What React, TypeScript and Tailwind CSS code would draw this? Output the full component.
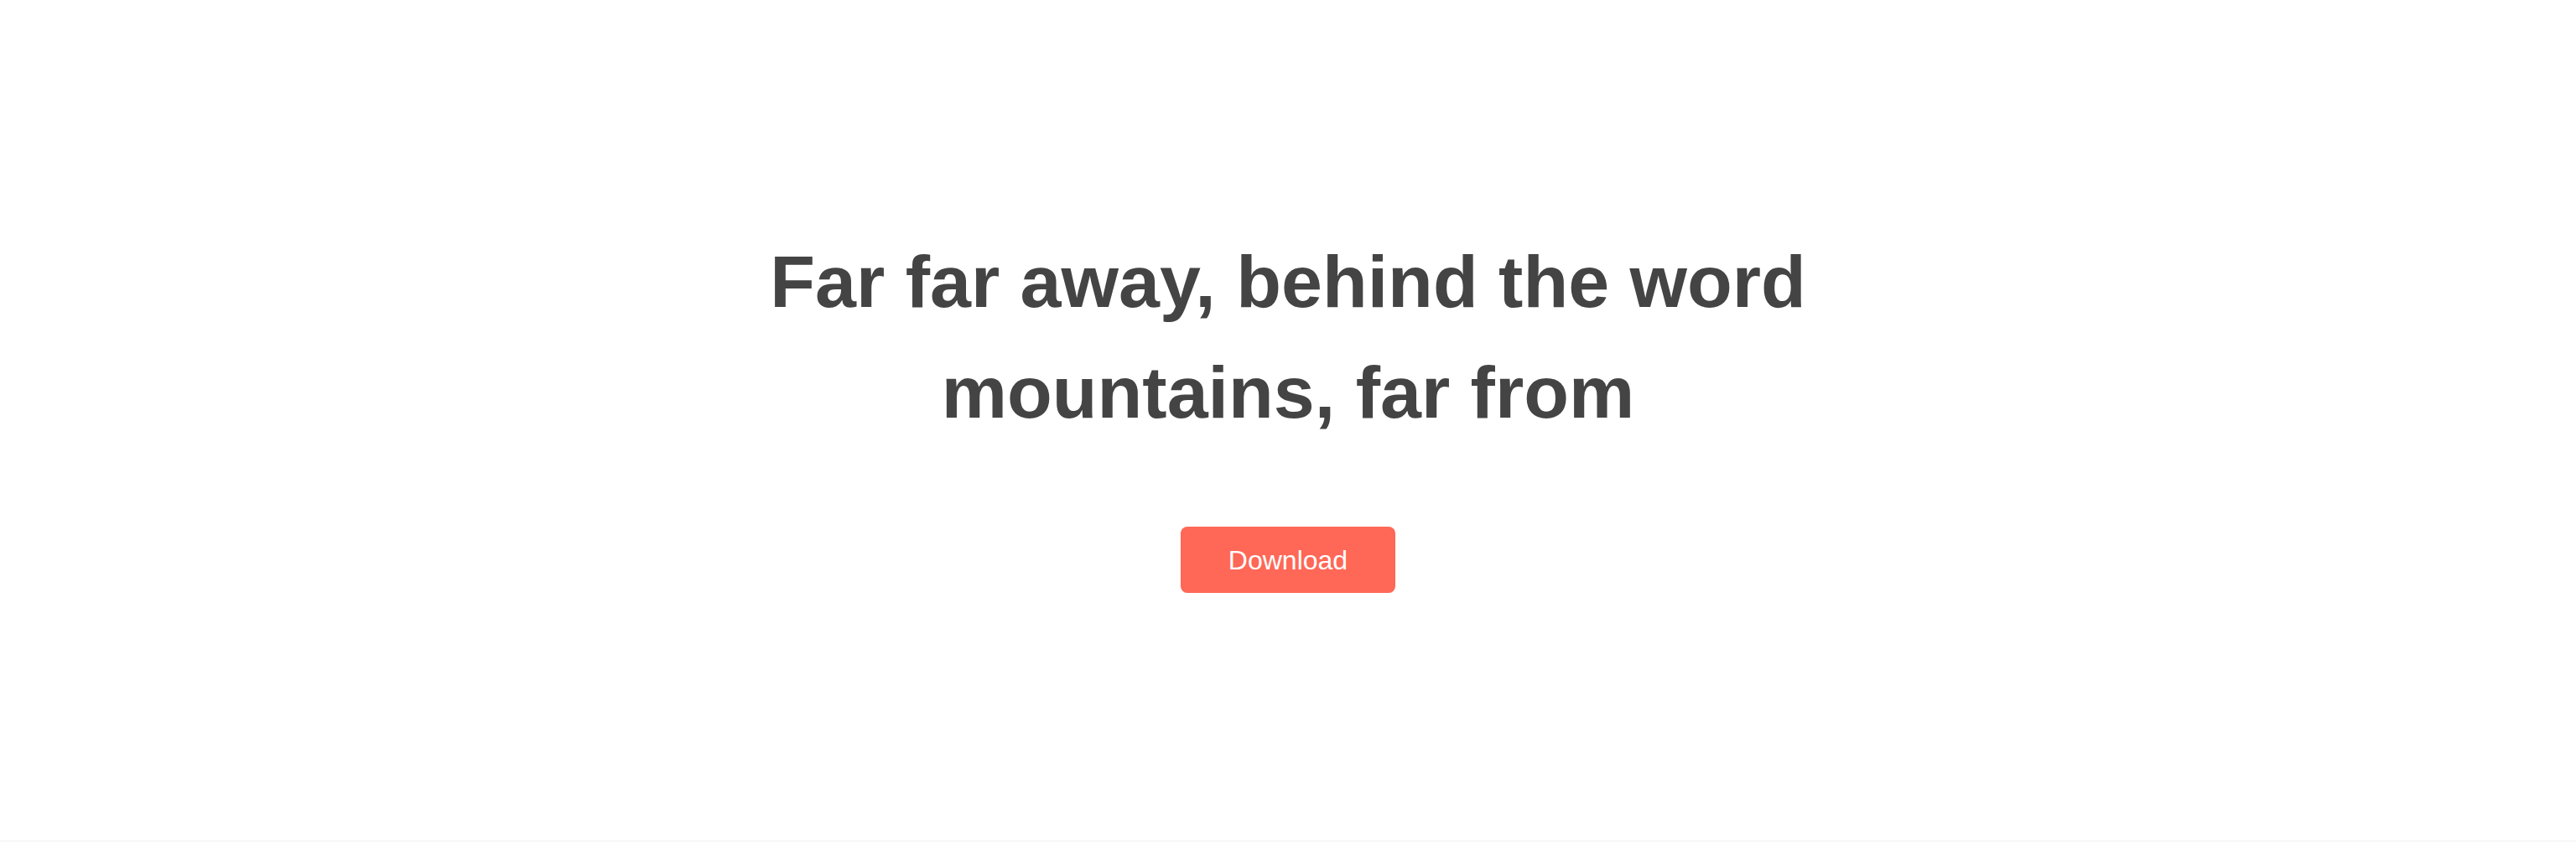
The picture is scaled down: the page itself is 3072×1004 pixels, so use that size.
export default function App() {
  return (
    <div className="w-full h-[1004px] bg-white flex flex-col overflow-hidden" style={{ fontFamily: '"Liberation Sans", Arial, sans-serif' }}>
      <section className="flex-1 flex flex-col items-center pt-[270px]">
        <h1 className="text-[88px] leading-[132px] font-bold text-[#444444] text-center w-[1400px]">
          Far far away, behind the word
          <br />
          mountains, far from
        </h1>
        <button className="mt-[94px] w-[256px] h-[79px] rounded-[8px] bg-[#ff6757] text-white text-[32px] font-normal">
          Download
        </button>
      </section>
      <div className="h-[2px] bg-[#f7f7f7]" />
    </div>
  );
}
